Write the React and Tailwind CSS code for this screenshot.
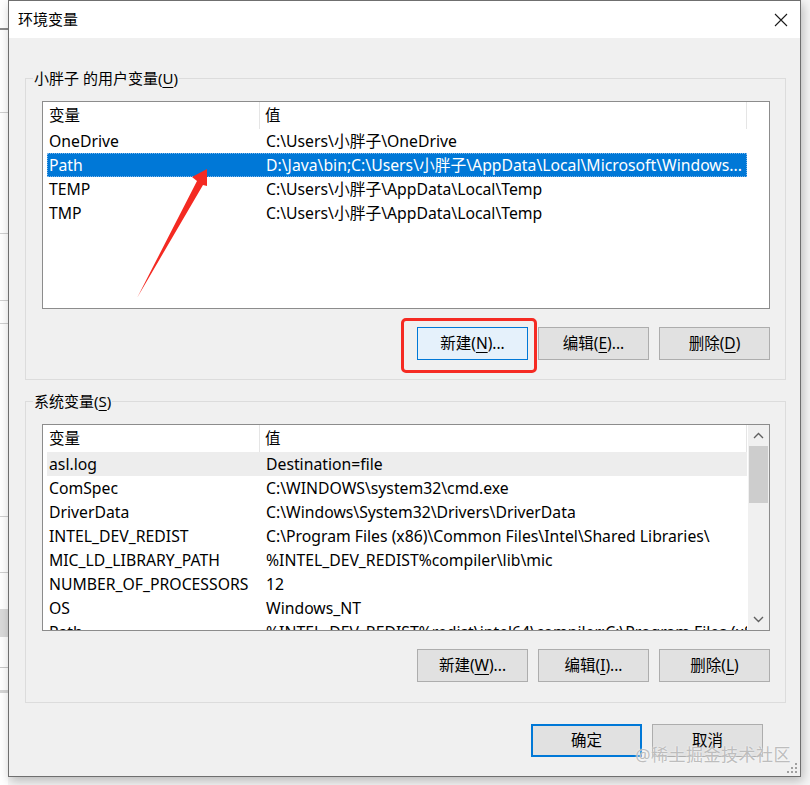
import React from "react";

const userVars = [
  ["OneDrive", "C:\\Users\\小胖子\\OneDrive"],
  ["Path", "D:\\Java\\bin;C:\\Users\\小胖子\\AppData\\Local\\Microsoft\\Windows..."],
  ["TEMP", "C:\\Users\\小胖子\\AppData\\Local\\Temp"],
  ["TMP", "C:\\Users\\小胖子\\AppData\\Local\\Temp"],
];

const sysVars = [
  ["asl.log", "Destination=file"],
  ["ComSpec", "C:\\WINDOWS\\system32\\cmd.exe"],
  ["DriverData", "C:\\Windows\\System32\\Drivers\\DriverData"],
  ["INTEL_DEV_REDIST", "C:\\Program Files (x86)\\Common Files\\Intel\\Shared Libraries\\"],
  ["MIC_LD_LIBRARY_PATH", "%INTEL_DEV_REDIST%compiler\\lib\\mic"],
  ["NUMBER_OF_PROCESSORS", "12"],
  ["OS", "Windows_NT"],
  ["Path", "%INTEL_DEV_REDIST%redist\\intel64\\compiler;C:\\Program Files (x86)\\Common Files\\Intel"],
];

function Btn({ children, kind }) {
  const cls =
    kind === "focus"
      ? "border border-[#0078d7] bg-[#e5f1fb]"
      : kind === "default"
      ? "border-2 border-[#0078d7] bg-[#e1e1e1]"
      : "border border-[#adadad] bg-[#e1e1e1]";
  return (
    <div className={`flex h-[33px] w-[111px] items-center justify-center text-[15.5px] leading-none text-black ${cls}`}>
      {children}
    </div>
  );
}

function U({ children }) {
  return <span className="underline decoration-1 underline-offset-[3px]">{children}</span>;
}

function Header() {
  return (
    <div className="flex h-[27px] shrink-0 items-center bg-white text-[15.5px]">
      <div className="flex h-full w-[217px] items-center border-r border-[#e5e5e5] pl-[6px]">变量</div>
      <div className="flex h-full w-[487px] items-center border-r border-[#e5e5e5] pl-[5px]">值</div>
    </div>
  );
}

function Row({ name, value, sel, soft }) {
  const bg = sel
    ? "bg-[#0078d7] text-white outline outline-1 -outline-offset-1 outline-dotted outline-[#7fb7ea]"
    : soft
    ? "bg-[#ededed] text-black"
    : "text-black";
  return (
    <div className={`ml-[4px] flex h-6 w-[700px] shrink-0 items-center whitespace-nowrap pt-[2px] text-[15.75px] ${bg}`}>
      <div className="w-[213px] pl-[2px]">{name}</div>
      <div className="flex-1 overflow-hidden pl-[6px]">{value}</div>
    </div>
  );
}

function Chevron({ up }) {
  return (
    <svg width="11" height="7" viewBox="0 0 11 7">
      <path
        d={up ? "M1 6 L5.5 1.5 L10 6" : "M1 1 L5.5 5.5 L10 1"}
        fill="none"
        stroke="#606060"
        strokeWidth="1.4"
      />
    </svg>
  );
}

export default function App() {
  return (
    <div className="flex h-[785px] w-[810px] overflow-hidden bg-[#f6f6f6] font-['Noto_Sans','Noto_Sans_CJK_SC',sans-serif]">
      {/* background window strip */}
      <div className="flex h-full w-[8px] shrink-0 flex-col bg-white">
        <div className="mt-[28px] h-[2px] bg-[#8a8a8a]" />
        <div className="mt-[82px] h-px bg-[#d0d0d0]" />
        <div className="mt-[120px] h-px bg-[#d0d0d0]" />
        <div className="mt-[66px] h-px bg-[#d0d0d0]" />
        <div className="mt-[22px] h-px bg-[#d0d0d0]" />
        <div className="mt-[192px] h-px bg-[#d0d0d0]" />
        <div className="mt-[55px] h-px bg-[#d0d0d0]" />
        <div className="mt-[36px] h-[28px] bg-[#dadada]" />
        <div className="mt-[30px] h-px bg-[#c8c8c8]" />
        <div className="mt-[22px] h-[3px] bg-[#d5d5d5]" />
      </div>

      {/* window */}
      <div className="relative flex h-[777px] w-[793px] shrink-0 flex-col border border-[#6f6f6f] bg-[#f0f0f0] shadow-[2px_4px_10px_rgba(0,0,0,0.25)]">
        {/* title bar */}
        <div className="flex h-[37px] shrink-0 items-center justify-between bg-white pl-[9px] pr-[12px]">
          <span className="text-[15px] text-black">环境变量</span>
          <svg width="14" height="14" viewBox="0 0 14 14">
            <path d="M1 1 L13 13 M13 1 L1 13" stroke="#1a1a1a" strokeWidth="1.1" />
          </svg>
        </div>

        <div className="flex flex-1 flex-col pl-[16px] pr-[14px]">
          {/* user group */}
          <div className="relative mt-[40px] border border-[#dcdcdc] pb-[19px] pl-[16px] pr-[15px] pt-[22px]">
            <div className="absolute -top-[12px] left-[7px] bg-[#f0f0f0] px-[1px] text-[15px] leading-[22px] text-black">
              小胖子 的用户变量(<U>U</U>)
            </div>
            <div className="relative flex h-[208px] flex-col overflow-hidden border border-[#8c8c8c] bg-white">
              <Header />
              {userVars.map(([n, v], i) => (
                <Row key={n} name={n} value={v} sel={i === 1} />
              ))}
              {/* red arrow annotation */}
              <svg className="absolute left-0 top-0" width="200" height="207" viewBox="0 0 200 207">
                <polygon
                  points="164,67 149,75 154,79 94,196 160,83 164,84"
                  fill="#f42a22"
                />
              </svg>
            </div>
            <div className="mt-[18px] flex justify-end gap-[10px]">
              <div className="relative">
                <div className="absolute -bottom-[13px] -left-[16px] -right-[9px] -top-[9px] rounded-[5px] border-[3px] border-[#f52a22]" />
                <Btn kind="focus">
                  新建(<U>N</U>)...
                </Btn>
              </div>
              <Btn>
                编辑(<U>E</U>)...
              </Btn>
              <Btn>
                删除(<U>D</U>)
              </Btn>
            </div>
          </div>

          {/* system group */}
          <div className="relative mt-[21px] border border-[#dcdcdc] pb-[20px] pl-[16px] pr-[15px] pt-[22px]">
            <div className="absolute -top-[12px] left-[7px] bg-[#f0f0f0] px-[1px] text-[15px] leading-[22px] text-black">
              系统变量(<U>S</U>)
            </div>
            <div className="flex h-[207px] overflow-hidden border border-[#8c8c8c] bg-white">
              <div className="flex min-w-0 flex-1 flex-col overflow-hidden">
                <Header />
                {sysVars.map(([n, v], i) => (
                  <Row key={n} name={n} value={v} soft={i === 0} />
                ))}
              </div>
              <div className="flex w-[21px] shrink-0 flex-col bg-[#f0f0f0]">
                <div className="flex h-[21px] items-center justify-center">
                  <Chevron up />
                </div>
                <div className="mx-[1px] h-[57px] bg-[#cdcdcd]" />
                <div className="flex-1" />
                <div className="flex h-[21px] items-center justify-center">
                  <Chevron />
                </div>
              </div>
            </div>
            <div className="mt-[18px] flex justify-end gap-[10px]">
              <Btn>
                新建(<U>W</U>)...
              </Btn>
              <Btn>
                编辑(<U>I</U>)...
              </Btn>
              <Btn>
                删除(<U>L</U>)
              </Btn>
            </div>
          </div>

          {/* OK / Cancel */}
          <div className="mt-[21px] flex justify-end gap-[10px] pr-[23px]">
            <Btn kind="default">确定</Btn>
            <Btn>取消</Btn>
          </div>
        </div>

        {/* watermark */}
        <div className="absolute bottom-[13px] right-[9px] text-[17px] leading-none tracking-[0.5px] text-[#bdbdbd] [text-shadow:0_0_2px_#ffffff]">
          @稀土掘金技术社区
        </div>
        {/* resize grip */}
        <svg className="absolute bottom-[2px] right-[2px]" width="12" height="12" viewBox="0 0 12 12">
          <g fill="#a0a0a0">
            <rect x="9" y="1" width="2" height="2" />
            <rect x="5" y="5" width="2" height="2" />
            <rect x="9" y="5" width="2" height="2" />
            <rect x="1" y="9" width="2" height="2" />
            <rect x="5" y="9" width="2" height="2" />
            <rect x="9" y="9" width="2" height="2" />
          </g>
        </svg>
      </div>
    </div>
  );
}
